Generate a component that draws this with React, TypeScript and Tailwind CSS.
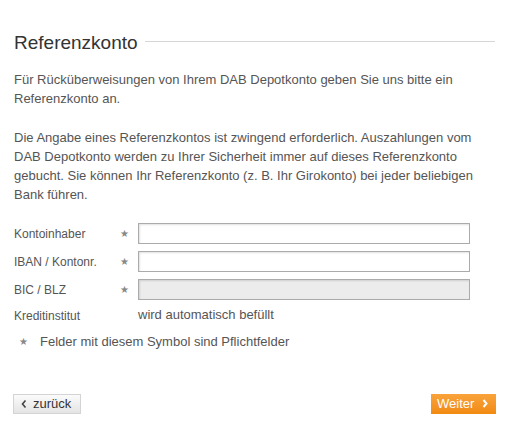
import React from "react";

export default function App() {
  const font = { fontFamily: '"Liberation Sans", Arial, sans-serif' };
  return (
    <div className="w-[507px] h-[428px] bg-white text-[13px] text-[#555]" style={font}>
      <div className="pl-[14px] pr-[12px] pt-[32px]">
        <div className="flex items-center gap-[7px]">
          <h2 className="text-[19px] leading-[22px] text-[#333] font-normal">Referenzkonto</h2>
          <div className="flex-1 h-px bg-[#d6d6d6] mt-[-4px]" />
        </div>
        <p className="mt-[16px] leading-[19px] pr-[20px]">
          Für Rücküberweisungen von Ihrem DAB Depotkonto geben Sie uns bitte ein Referenzkonto an.
        </p>
        <p className="mt-[20px] leading-[19px] pr-[20px]">
          Die Angabe eines Referenzkontos ist zwingend erforderlich. Auszahlungen vom DAB Depotkonto werden zu Ihrer Sicherheit immer auf dieses Referenzkonto gebucht. Sie können Ihr Referenzkonto (z. B. Ihr Girokonto) bei jeder beliebigen Bank führen.
        </p>
        <div className="mt-[19px] flex flex-col gap-[7px]">
          {["Kontoinhaber", "IBAN / Kontonr.", "BIC / BLZ"].map((l, i) => (
            <div key={l} className="flex items-center h-[21px]">
              <span className="w-[106px] text-[12px]">{l}</span>
              <span className="w-[18px] text-[10px] text-[#888]">★</span>
              <div
                className={
                  "w-[332px] h-[21px] border border-[#ababab] shadow-[inset_1px_1px_2px_rgba(0,0,0,0.12)] " +
                  (i === 2 ? "bg-[#ececec]" : "bg-white")
                }
              />
            </div>
          ))}
          <div className="flex items-start mt-[-2px]">
            <span className="w-[124px] mt-[2px] text-[12px]">Kreditinstitut</span>
            <span>wird automatisch befüllt</span>
          </div>
        </div>
        <div className="mt-[7px] flex items-center pl-[5px]">
          <span className="w-[21px] text-[10px] text-[#888]">★</span>
          <span>Felder mit diesem Symbol sind Pflichtfelder</span>
        </div>
        <div className="mt-[42px] flex justify-between mr-[-1px]">
          <button className="h-[20px] w-[68px] ml-[-1px] flex items-center gap-[6px] pl-[7px] border border-[#d4d4d4] bg-gradient-to-b from-[#fbfbfb] to-[#e4e4e4] text-[13px] text-[#333]">
            <svg width="6" height="8" viewBox="0 0 6 8"><path d="M4.5 0.5 L1.5 4 L4.5 7.5" stroke="#444" strokeWidth="1.6" fill="none" /></svg>
            <span>zurück</span>
          </button>
          <button className="h-[20px] w-[65px] flex items-center gap-[8px] pl-[6px] bg-gradient-to-b from-[#f9a33a] to-[#f18a0f] text-[13px] text-white">
            <span>Weiter</span>
            <svg width="6" height="9" viewBox="0 0 6 9"><path d="M1.5 1 L4.5 4.5 L1.5 8" stroke="#fff" strokeWidth="2" fill="none" /></svg>
          </button>
        </div>
      </div>
    </div>
  );
}
